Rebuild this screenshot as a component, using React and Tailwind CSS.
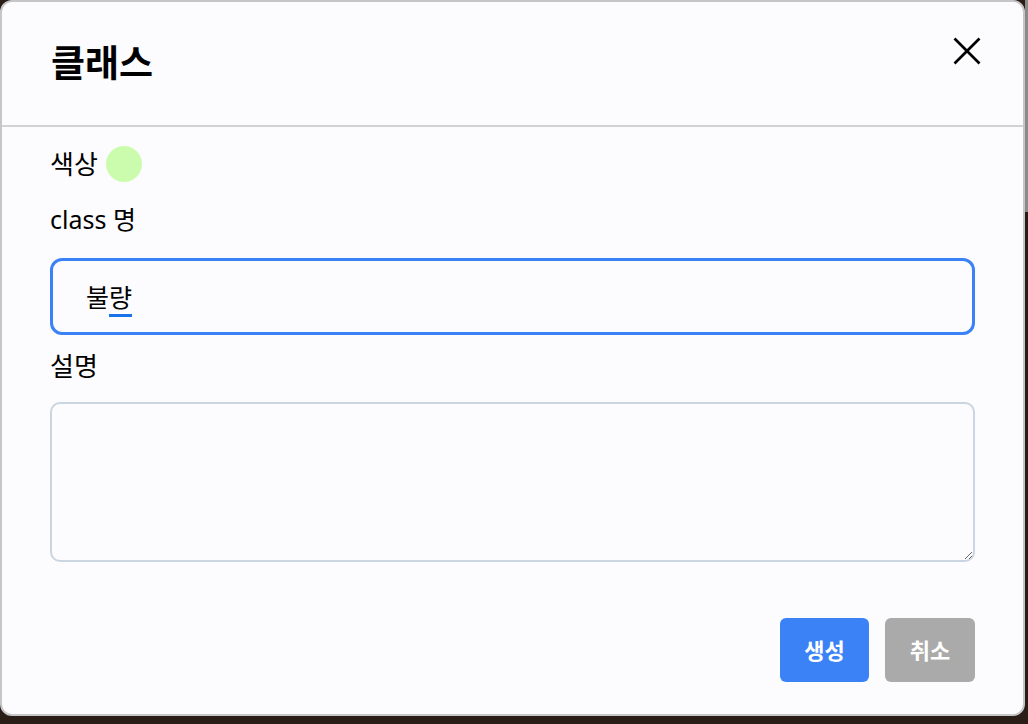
import React, { useState } from 'react';

const FONT = { fontFamily: '"Noto Sans", "Noto Sans CJK KR", sans-serif' };

function CloseIcon() {
  return (
    <svg width="28" height="28" viewBox="0 0 28 28" fill="none" stroke="#000" strokeWidth="2.6" strokeLinecap="butt">
      <line x1="1.5" y1="1.5" x2="26.5" y2="26.5" />
      <line x1="26.5" y1="1.5" x2="1.5" y2="26.5" />
    </svg>
  );
}

function App() {
  const [name, setName] = useState('불량');
  const [desc, setDesc] = useState('');

  return (
    <div className="w-screen h-screen flex bg-[#2a1c16] overflow-hidden" style={FONT}>
      <div className="flex flex-col w-[1025px] h-[716px] shrink-0 bg-[#fcfcfe] border-2 border-[#c6c6c8] rounded-xl">
        {/* header */}
        <div className="h-[125px] shrink-0 flex items-start justify-between pl-[49px] pr-[42px] border-b-2 border-[#d2d2d4]">
          <h1 className="mt-[37px] text-[37px] font-bold leading-[48px] text-black">클래스</h1>
          <button className="mt-[35px] p-0">
            <CloseIcon />
          </button>
        </div>

        {/* body */}
        <div className="flex flex-col px-[48px] pt-[19px] text-black">
          <div className="flex items-center gap-2 h-[36px]">
            <span className="text-[26px] leading-[36px]">색상</span>
            <span className="w-9 h-9 rounded-full bg-[#cbfcad]" />
          </div>

          <label className="mt-[19px] text-[25px] leading-[36px]">class 명</label>

          <div className="mt-[21px] h-[77px] rounded-xl border-[3px] border-[#3b82f6] flex items-center pl-[33px]">
            <span className="text-[25px] leading-[36px]">
              불<span className="border-b-[3px] border-[#1a73e8]">량</span>
            </span>
            <input
              className="sr-only"
              value={name}
              onChange={(e) => setName(e.target.value)}
            />
          </div>

          <label className="mt-[13px] text-[26px] leading-[36px]">설명</label>

          <textarea
            className="mt-[18px] h-[160px] w-full rounded-[10px] border-2 border-[#cbd5e1] bg-[#fcfcfe] p-3 text-[20px] outline-none"
            value={desc}
            onChange={(e) => setDesc(e.target.value)}
          />

          <div className="flex justify-end gap-4 mt-[56px]">
            <button className="w-[89px] h-[64px] rounded-md bg-[#3b82f6] text-white text-[22px] font-bold">
              생성
            </button>
            <button className="w-[90px] h-[64px] rounded-md bg-[#aaaaaa] text-white text-[22px] font-bold">
              취소
            </button>
          </div>
        </div>
      </div>
      <div className="flex flex-col w-[3px]">
        <div className="h-[212px] bg-[#8a8a8a]" />
        <div className="flex-1 bg-[#2a1c16]" />
      </div>
    </div>
  );
}

export default App;
